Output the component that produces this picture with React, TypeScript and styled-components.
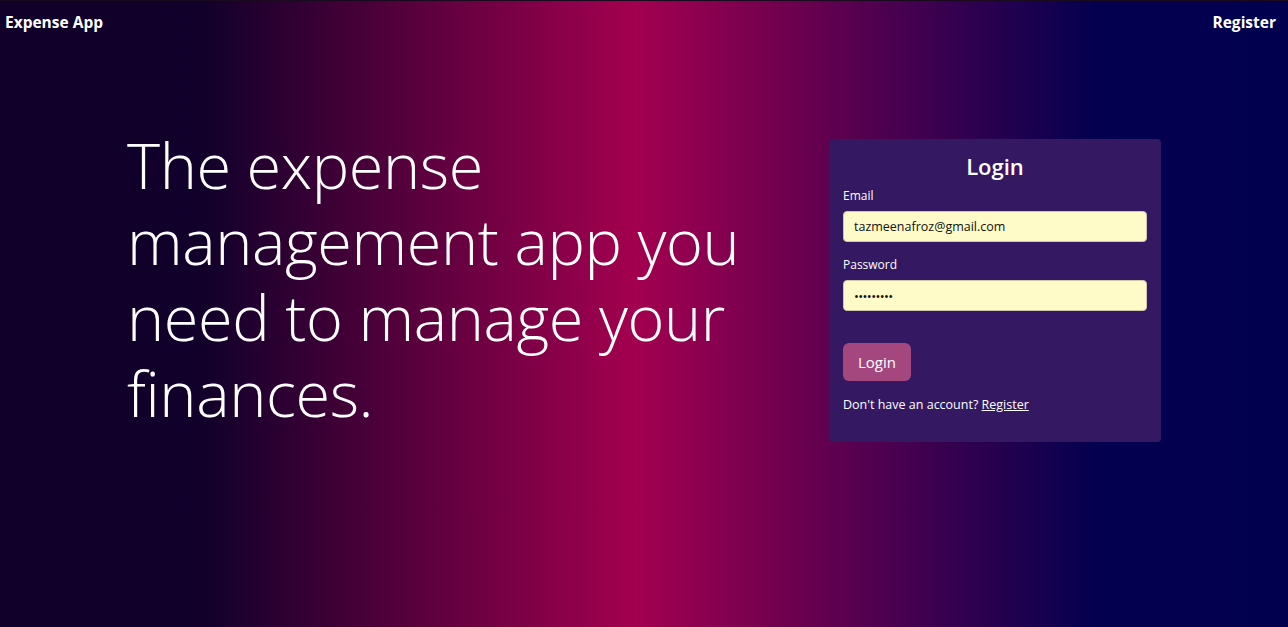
import styled, { createGlobalStyle } from 'styled-components'
import { ReactElement } from 'react'

const GlobalStyle = createGlobalStyle`
  * { box-sizing: border-box; }
  html, body { margin: 0; padding: 0; }
  body {
    font-family: 'Open Sans', 'Liberation Sans', sans-serif;
    color: #ffffff;
  }
`

const Page = styled.div`
  min-height: 627px;
  border-top: 1px solid #1a0a1e;
  background: linear-gradient(
    to right,
    #10002a 0%,
    #12002b 16%,
    #a3004f 49.3%,
    #04004f 85%,
    #01004f 100%
  );
`

const NavBar = styled.nav`
  height: 42px;
  display: flex;
  align-items: center;
  justify-content: space-between;
  padding: 0 12px 0 5px;
`

const NavLink = styled.a`
  color: #ffffff;
  font-size: 15.5px;
  font-weight: 700;
  text-decoration: none;
`

const Main = styled.main`
  display: grid;
  grid-template-columns: 702px 332px;
  align-items: start;
  padding: 84px 0 0 127px;
`

const Headline = styled.h1`
  margin: 0;
  width: 640px;
  font-size: 63px;
  font-weight: 300;
  line-height: 76px;
  letter-spacing: -0.4px;
  color: #ffffff;
`

const Card = styled.form`
  margin-top: 12px;
  background: #341862;
  border-radius: 4px;
  padding: 12px 14px 28px;
  display: flex;
  flex-direction: column;
`

const CardTitle = styled.h2`
  margin: 0 0 6px;
  text-align: center;
  font-size: 22px;
  font-weight: 600;
  line-height: 30px;
`

const Label = styled.label`
  font-size: 12px;
  line-height: 18px;
  margin-bottom: 6px;
`

const Input = styled.input<{ $dots?: boolean }>`
  height: 31px;
  width: 100%;
  border: 1px solid #cfc7a8;
  border-radius: 4px;
  background: #fffbc8;
  padding: 0 10px;
  font-family: 'Open Sans', 'Liberation Sans', sans-serif;
  font-size: ${({ $dots }) => ($dots ? '13px' : '12.5px')};
  letter-spacing: ${({ $dots }) => ($dots ? '-0.6px' : '0')};
  color: #111111;
  margin-bottom: 14px;
  outline: none;
`

const Button = styled.button`
  align-self: flex-start;
  margin-top: 18px;
  width: 68px;
  height: 38px;
  border: none;
  border-radius: 6px;
  background: #a4477f;
  color: #ffffff;
  font-family: 'Open Sans', 'Liberation Sans', sans-serif;
  font-size: 15px;
`

const Footnote = styled.p`
  margin: 15px 0 0;
  font-size: 12.5px;
  line-height: 18px;
`

const FootLink = styled.a`
  color: #ffffff;
  text-decoration: underline;
`

export default function App(): ReactElement {
  return (
    <>
      <GlobalStyle />
      <Page>
        <NavBar>
          <NavLink href="#">Expense App</NavLink>
          <NavLink href="#">Register</NavLink>
        </NavBar>
        <Main>
          <Headline>The expense management app you need to manage your finances.</Headline>
          <Card onSubmit={(e) => e.preventDefault()}>
            <CardTitle>Login</CardTitle>
            <Label htmlFor="email">Email</Label>
            <Input id="email" type="text" defaultValue="tazmeenafroz@gmail.com" />
            <Label htmlFor="password">Password</Label>
            <Input id="password" $dots type="text" defaultValue="•••••••••" />
            <Button type="submit">Login</Button>
            <Footnote>
              Don't have an account? <FootLink href="#">Register</FootLink>
            </Footnote>
          </Card>
        </Main>
      </Page>
    </>
  )
}
